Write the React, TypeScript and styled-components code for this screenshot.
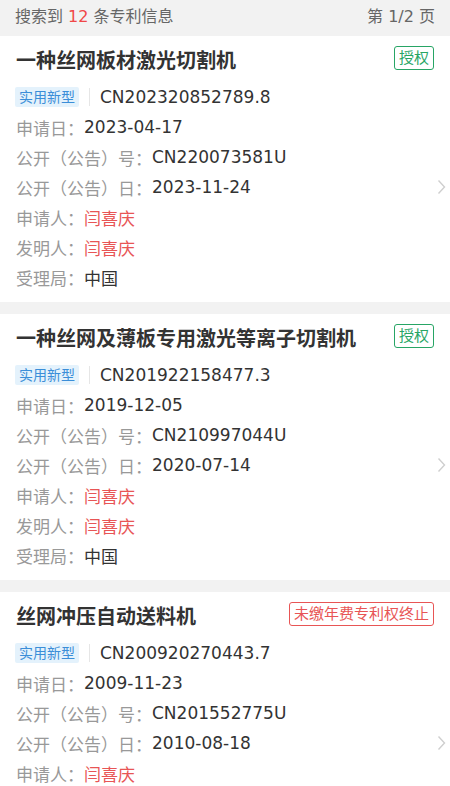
import React from 'react';
import styled, { createGlobalStyle } from 'styled-components';

const GlobalStyle = createGlobalStyle`
  html, body {
    margin: 0;
    padding: 0;
    background: #f2f2f2;
  }
  #root {
    height: 786px;
    overflow: hidden;
  }
`;

const latin = `"DejaVu Sans", "Noto Sans CJK SC", sans-serif`;

type Patent = {
  title: string;
  status: string;
  statusTone: 'green' | 'red';
  kind: string;
  number: string;
  applyDate: string;
  pubNumber: string;
  pubDate: string;
  applicant: string;
  inventor: string;
  office: string;
};

const patents: Patent[] = [
  {
    title: '一种丝网板材激光切割机',
    status: '授权',
    statusTone: 'green',
    kind: '实用新型',
    number: 'CN202320852789.8',
    applyDate: '2023-04-17',
    pubNumber: 'CN220073581U',
    pubDate: '2023-11-24',
    applicant: '闫喜庆',
    inventor: '闫喜庆',
    office: '中国',
  },
  {
    title: '一种丝网及薄板专用激光等离子切割机',
    status: '授权',
    statusTone: 'green',
    kind: '实用新型',
    number: 'CN201922158477.3',
    applyDate: '2019-12-05',
    pubNumber: 'CN210997044U',
    pubDate: '2020-07-14',
    applicant: '闫喜庆',
    inventor: '闫喜庆',
    office: '中国',
  },
  {
    title: '丝网冲压自动送料机',
    status: '未缴年费专利权终止',
    statusTone: 'red',
    kind: '实用新型',
    number: 'CN200920270443.7',
    applyDate: '2009-11-23',
    pubNumber: 'CN201552775U',
    pubDate: '2010-08-18',
    applicant: '闫喜庆',
    inventor: '闫喜庆',
    office: '中国',
  },
];

const toneColors = {
  green: '#27a565',
  red: '#e85555',
};

const Page = styled.div`
  font-family: ${latin};
  background: #f2f2f2;
  display: flex;
  flex-direction: column;
  gap: 12px;
`;

const SummaryBar = styled.div`
  height: 36px;
  box-sizing: border-box;
  padding: 0 15px 6px;
  display: flex;
  align-items: center;
  justify-content: space-between;
  font-size: 16px;
  color: #666;
  margin-bottom: -12px;
`;

const Count = styled.span`
  color: #f04848;
`;

const Card = styled.div`
  background: #fff;
  padding: 10px 15px 10px 16px;
`;

const TitleRow = styled.div`
  display: flex;
  align-items: center;
  justify-content: space-between;
  gap: 10px;
  height: 26px;
  margin-bottom: 10px;
`;

const Title = styled.div`
  font-size: 20px;
  font-weight: 700;
  color: #333;
  white-space: nowrap;
`;

const StatusBadge = styled.span<{ $tone: 'green' | 'red' }>`
  font-size: 15px;
  line-height: 22px;
  padding: 0 4px;
  border: 1px solid ${({ $tone }) => toneColors[$tone]};
  color: ${({ $tone }) => toneColors[$tone]};
  border-radius: 3px;
  margin-top: -2px;
  margin-right: 1px;
  white-space: nowrap;
`;

const Body = styled.div`
  display: flex;
  align-items: center;
`;

const Info = styled.div`
  flex: 1;
  display: flex;
  flex-direction: column;
`;

const Line = styled.div`
  height: 30px;
  display: flex;
  align-items: center;
  font-size: 17px;
  white-space: nowrap;
`;

const KindTag = styled.span`
  font-size: 14px;
  line-height: 20px;
  padding: 0 4px;
  margin-left: -1px;
  color: #3b8ed8;
  background: #e4f2fc;
  border-radius: 2px;
`;

const Divider = styled.span`
  width: 1px;
  height: 18px;
  background: #e6e6e6;
  margin: 0 10px 0 10px;
`;

const Label = styled.span`
  color: #999;
`;

const Value = styled.span<{ $red?: boolean }>`
  color: ${({ $red }) => ($red ? '#e85555' : '#333')};
`;

const Chevron = styled.svg`
  flex: none;
  margin-right: -11px;
`;

function PatentCard({ item }: { item: Patent }): React.ReactElement {
  return (
    <Card>
      <TitleRow>
        <Title>{item.title}</Title>
        <StatusBadge $tone={item.statusTone}>{item.status}</StatusBadge>
      </TitleRow>
      <Body>
        <Info>
          <Line>
            <KindTag>{item.kind}</KindTag>
            <Divider />
            <Value>{item.number}</Value>
          </Line>
          <Line>
            <Label>申请日：</Label>
            <Value>{item.applyDate}</Value>
          </Line>
          <Line>
            <Label>公开（公告）号：</Label>
            <Value>{item.pubNumber}</Value>
          </Line>
          <Line>
            <Label>公开（公告）日：</Label>
            <Value>{item.pubDate}</Value>
          </Line>
          <Line>
            <Label>申请人：</Label>
            <Value $red>{item.applicant}</Value>
          </Line>
          <Line>
            <Label>发明人：</Label>
            <Value $red>{item.inventor}</Value>
          </Line>
          <Line>
            <Label>受理局：</Label>
            <Value>{item.office}</Value>
          </Line>
        </Info>
        <Chevron width="9" height="16" viewBox="0 0 9 16">
          <path d="M1.5 1.5 L7.5 8 L1.5 14.5" fill="none" stroke="#cfcfcf" strokeWidth="1.4" />
        </Chevron>
      </Body>
    </Card>
  );
}

function App(): React.ReactElement {
  return (
    <Page>
      <GlobalStyle />
      <SummaryBar>
        <span>
          搜索到 <Count>12</Count> 条专利信息
        </span>
        <span>第 1/2 页</span>
      </SummaryBar>
      {patents.map((p) => (
        <PatentCard key={p.number} item={p} />
      ))}
    </Page>
  );
}

export default App;
